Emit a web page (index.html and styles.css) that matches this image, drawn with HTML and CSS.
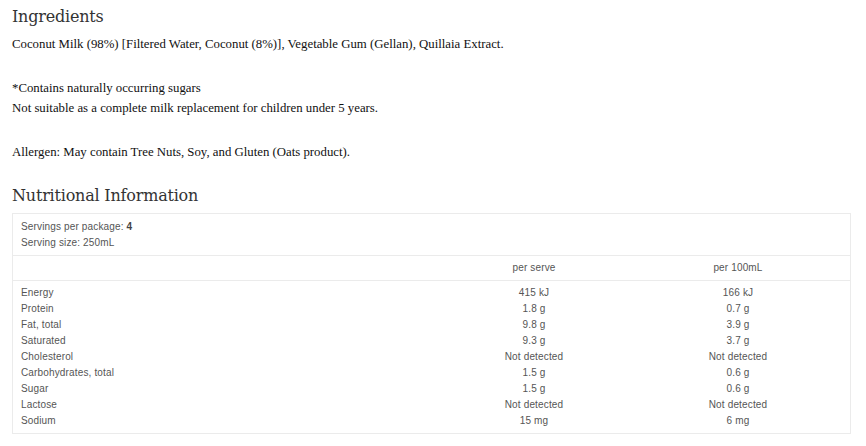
FILE: index.html
```html
<!DOCTYPE html>
<html>
<head>
<meta charset="utf-8">
<link rel="stylesheet" href="styles.css">
</head>
<body>
<div class="page">
  <h2 class="title">Ingredients</h2>
  <p class="text">Coconut Milk (98%) [Filtered Water, Coconut (8%)], Vegetable Gum (Gellan), Quillaia Extract.</p>
  <p class="text">*Contains naturally occurring sugars<br>Not suitable as a complete milk replacement for children under 5 years.</p>
  <p class="text">Allergen: May contain Tree Nuts, Soy, and Gluten (Oats product).</p>
  <h2 class="title title-2">Nutritional Information</h2>
  <div class="panel">
    <div class="servings">
      <div>Servings per package: <b>4</b></div>
      <div>Serving size: 250mL</div>
    </div>
    <table class="nutri">
      <colgroup>
        <col class="w-label"><col class="w-val"><col class="w-val"><col>
      </colgroup>
      <thead>
        <tr><th class="c-label"></th><th>per serve</th><th>per 100mL</th><th></th></tr>
      </thead>
      <tbody>
        <tr class="first"><td class="c-label">Energy</td><td>415 kJ</td><td>166 kJ</td><td></td></tr>
        <tr><td class="c-label">Protein</td><td>1.8 g</td><td>0.7 g</td><td></td></tr>
        <tr><td class="c-label">Fat, total</td><td>9.8 g</td><td>3.9 g</td><td></td></tr>
        <tr><td class="c-label">Saturated</td><td>9.3 g</td><td>3.7 g</td><td></td></tr>
        <tr><td class="c-label">Cholesterol</td><td>Not detected</td><td>Not detected</td><td></td></tr>
        <tr><td class="c-label">Carbohydrates, total</td><td>1.5 g</td><td>0.6 g</td><td></td></tr>
        <tr><td class="c-label">Sugar</td><td>1.5 g</td><td>0.6 g</td><td></td></tr>
        <tr><td class="c-label">Lactose</td><td>Not detected</td><td>Not detected</td><td></td></tr>
        <tr class="last"><td class="c-label">Sodium</td><td>15 mg</td><td>6 mg</td><td></td></tr>
      </tbody>
    </table>
  </div>
</div>
</body>
</html>
```

FILE: styles.css
```css
html, body {
  margin: 0;
  padding: 0;
  background: #fff;
}
.page {
  padding: 5px 15px 0 12px;
}
.title {
  margin: 0 0 5px 0;
  font-family: "DejaVu Serif", serif;
  font-weight: normal;
  font-size: 16px;
  letter-spacing: -0.2px;
  line-height: 24px;
  color: #333;
}
.title-2 {
  margin-top: 22px;
}
.text {
  margin: 0 0 24px 0;
  font-family: "Liberation Serif", serif;
  font-size: 12.8px;
  line-height: 20px;
  color: #111;
}
.text:last-of-type {
  margin-bottom: 0;
}
.panel {
  border: 1px solid #ebebeb;
  font-family: "Liberation Sans", Arial, sans-serif;
  font-size: 10px;
  letter-spacing: 0.15px;
  line-height: 16px;
  color: #555;
}
.servings {
  padding: 5px 8px 4px 8px;
  border-bottom: 1px solid #ebebeb;
}
.servings b {
  font-weight: bold;
  color: #444;
}
.nutri {
  width: 100%;
  border-collapse: collapse;
  table-layout: fixed;
}
.w-label { width: 419px; }
.w-val { width: 204px; }
.nutri th, .nutri td {
  padding: 0;
  text-align: center;
  font-weight: normal;
}
.nutri .c-label {
  text-align: left;
  padding-left: 8px;
}
.nutri thead th {
  padding-top: 4px;
  padding-bottom: 4px;
  border-bottom: 1px solid #ebebeb;
}
.nutri tr.first td {
  padding-top: 4px;
}
.nutri tr.last td {
  padding-bottom: 4px;
}
```
